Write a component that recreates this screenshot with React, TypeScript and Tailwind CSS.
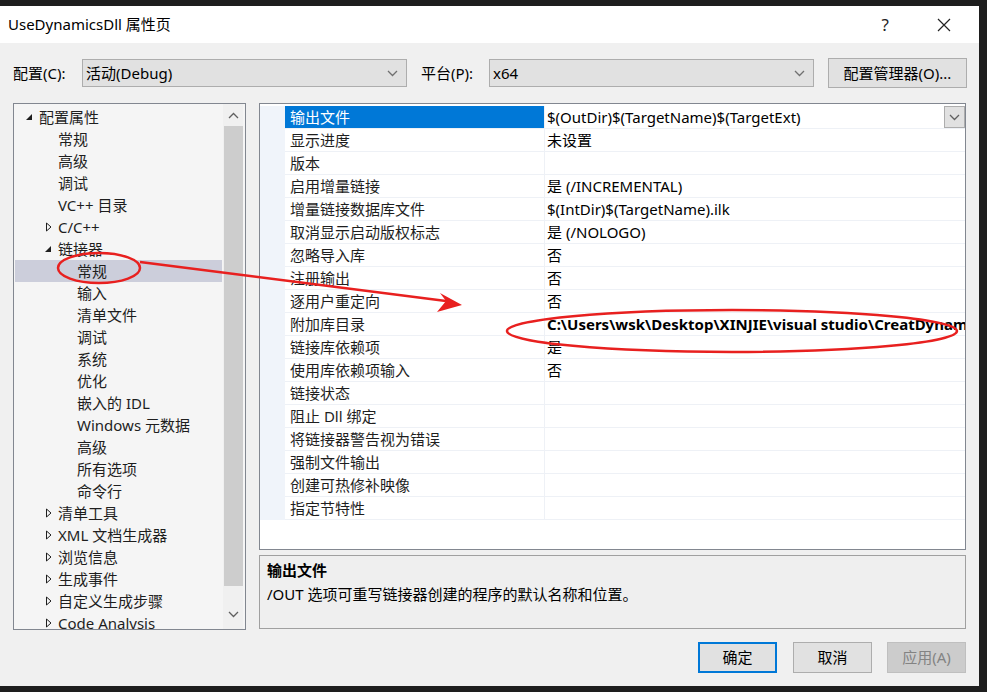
import React from 'react';

// 左侧树节点
type TreeNode = { label: string; level: number; arrow?: 'open' | 'closed'; selected?: boolean };

const treeNodes: TreeNode[] = [
  { label: '配置属性', level: 0, arrow: 'open' },
  { label: '常规', level: 1 },
  { label: '高级', level: 1 },
  { label: '调试', level: 1 },
  { label: 'VC++ 目录', level: 1 },
  { label: 'C/C++', level: 1, arrow: 'closed' },
  { label: '链接器', level: 1, arrow: 'open' },
  { label: '常规', level: 2, selected: true },
  { label: '输入', level: 2 },
  { label: '清单文件', level: 2 },
  { label: '调试', level: 2 },
  { label: '系统', level: 2 },
  { label: '优化', level: 2 },
  { label: '嵌入的 IDL', level: 2 },
  { label: 'Windows 元数据', level: 2 },
  { label: '高级', level: 2 },
  { label: '所有选项', level: 2 },
  { label: '命令行', level: 2 },
  { label: '清单工具', level: 1, arrow: 'closed' },
  { label: 'XML 文档生成器', level: 1, arrow: 'closed' },
  { label: '浏览信息', level: 1, arrow: 'closed' },
  { label: '生成事件', level: 1, arrow: 'closed' },
  { label: '自定义生成步骤', level: 1, arrow: 'closed' },
  { label: 'Code Analysis', level: 1, arrow: 'closed' },
];

const props: { name: string; value: string; bold?: boolean }[] = [
  { name: '输出文件', value: '$(OutDir)$(TargetName)$(TargetExt)' },
  { name: '显示进度', value: '未设置' },
  { name: '版本', value: '' },
  { name: '启用增量链接', value: '是 (/INCREMENTAL)' },
  { name: '增量链接数据库文件', value: '$(IntDir)$(TargetName).ilk' },
  { name: '取消显示启动版权标志', value: '是 (/NOLOGO)' },
  { name: '忽略导入库', value: '否' },
  { name: '注册输出', value: '否' },
  { name: '逐用户重定向', value: '否' },
  { name: '附加库目录', value: 'C:\\Users\\wsk\\Desktop\\XINJIE\\visual studio\\CreatDynamicsDll\\x64\\Debug', bold: true },
  { name: '链接库依赖项', value: '是' },
  { name: '使用库依赖项输入', value: '否' },
  { name: '链接状态', value: '' },
  { name: '阻止 Dll 绑定', value: '' },
  { name: '将链接器警告视为错误', value: '' },
  { name: '强制文件输出', value: '' },
  { name: '创建可热修补映像', value: '' },
  { name: '指定节特性', value: '' },
];

const font = { fontFamily: '"Noto Sans", "Noto Sans CJK SC", sans-serif' };

function Chevron({ up = false, className = '' }: { up?: boolean; className?: string }) {
  return (
    <svg width="11" height="7" viewBox="0 0 11 7" className={className}>
      <path d={up ? 'M1 6 L5.5 1.5 L10 6' : 'M1 1 L5.5 5.5 L10 1'} fill="none" stroke="currentColor" strokeWidth="1.3" />
    </svg>
  );
}

function Dropdown({ value, width }: { value: string; width: string }) {
  return (
    <div className={`${width} h-[28px] border border-[#adadad] bg-[#e1e1e1] flex items-center justify-between pl-[3px] pr-[8px] text-[15px] text-black`}>
      <span>{value}</span>
      <Chevron className="text-[#707070]" />
    </div>
  );
}

function TreeArrow({ kind }: { kind?: 'open' | 'closed' }) {
  if (!kind) return <span className="w-[14px] shrink-0" />;
  if (kind === 'open')
    return (
      <svg width="14" height="14" viewBox="0 0 14 14" className="shrink-0">
        <path d="M9 4 L9 10 L3 10 Z" fill="#1e1e1e" />
      </svg>
    );
  return (
    <svg width="14" height="14" viewBox="0 0 14 14" className="shrink-0">
      <path d="M4.5 3 L9 7 L4.5 11 Z" fill="none" stroke="#1e1e1e" strokeWidth="1" />
    </svg>
  );
}

function Button({ label, kind }: { label: string; kind: 'primary' | 'normal' | 'disabled' }) {
  const cls =
    kind === 'primary'
      ? 'border-2 border-[#0078d7] bg-[#e1e1e1] text-black'
      : kind === 'disabled'
      ? 'border border-[#bfbfbf] bg-[#cccccc] text-[#838383]'
      : 'border border-[#adadad] bg-[#e1e1e1] text-black';
  return <div className={`w-[79px] h-[31px] flex items-center justify-center text-[15px] ${cls}`}>{label}</div>;
}

export default function App() {
  return (
    <div className="relative w-[987px] h-[692px] bg-[#1e1e1e] overflow-hidden" style={font}>
      <div className="pt-[6px]">
        <div className="w-[979px] h-[680px] flex flex-col bg-[#f0f0f0]">
          {/* 标题栏 */}
          <div className="h-[37px] bg-white flex items-center justify-between pl-[8px] pr-[28px] shrink-0">
            <span className="text-[15px] text-black">UseDynamicsDll 属性页</span>
            <div className="flex items-center gap-[48px] text-[17px] text-[#222]">
              <span>?</span>
              <svg width="14" height="14" viewBox="0 0 14 14">
                <path d="M1 1 L13 13 M13 1 L1 13" stroke="#222" strokeWidth="1.2" />
              </svg>
            </div>
          </div>

          {/* 配置/平台 */}
          <div className="mt-[15px] h-[30px] flex items-center pl-[13px] shrink-0">
            <span className="text-[15px] w-[69px]">配置(C):</span>
            <Dropdown value="活动(Debug)" width="w-[325px]" />
            <span className="text-[15px] ml-[14px] w-[68px]">平台(P):</span>
            <Dropdown value="x64" width="w-[325px]" />
            <div className="ml-[14px] w-[139px] h-[30px] border border-[#adadad] bg-[#e1e1e1] flex items-center justify-center text-[15px]">
              配置管理器(O)...
            </div>
          </div>

          {/* 主体 */}
          <div className="mt-[15px] flex pl-[13px] gap-[13px] h-[527px] shrink-0">
            {/* 树 */}
            <div className="w-[233px] h-full border border-[#828790] bg-[#f5f5f5] flex overflow-hidden">
              <div className="flex-1 min-w-0 pt-[2px] pl-[1px] overflow-hidden">
                {treeNodes.map((n, i) => (
                  <div
                    key={i}
                    className={`h-[22px] flex items-center text-[15px] text-[#1e1e1e] whitespace-nowrap ${n.selected ? 'bg-[#cccedb]' : ''}`}
                    style={{ paddingLeft: 8 + n.level * 19 }}
                  >
                    <TreeArrow kind={n.arrow} />
                    <span className="ml-[2px]">{n.label}</span>
                  </div>
                ))}
              </div>
              <div className="w-[20px] shrink-0 ml-[1px] mr-[2px] bg-[#f0f0f0] flex flex-col items-center">
                <div className="h-[22px] flex items-center justify-center text-[#606060]">
                  <Chevron up />
                </div>
                <div className="w-[19px] h-[460px] bg-[#cdcdcd]" />
                <div className="flex-1" />
                <div className="h-[30px] flex items-center justify-center text-[#606060]">
                  <Chevron />
                </div>
              </div>
            </div>

            {/* 属性网格 + 描述 */}
            <div className="w-[707px] flex flex-col">
              <div className="h-[447px] border border-[#828790] bg-white flex flex-col overflow-hidden">
                <div className="pt-[2px] flex">
                  <div className="w-[25px] shrink-0 bg-[#f0f4fa]" />
                  <div className="flex-1 min-w-0 flex flex-col">
                    {props.map((p, i) => (
                      <div key={i} className="h-[23px] flex border-b border-[#eef1f6] text-[15px]">
                        <div
                          className={`w-[259px] shrink-0 pl-[5px] flex items-center whitespace-nowrap ${i === 0 ? 'bg-[#0078d7] text-white' : 'text-[#1e1e1e]'}`}
                        >
                          {p.name}
                        </div>
                        <div className="flex-1 min-w-0 border-l border-[#eef1f6] pl-[2px] flex items-center justify-between overflow-hidden whitespace-nowrap">
                          <span className={p.bold ? 'font-bold text-black' : 'text-black'}>{p.value}</span>
                          {i === 0 && (
                            <div className="w-[21px] h-[22px] shrink-0 border border-[#adadad] bg-[#e1e1e1] flex items-center justify-center text-[#606060]">
                              <Chevron />
                            </div>
                          )}
                        </div>
                      </div>
                    ))}
                  </div>
                </div>
              </div>
              <div className="mt-[5px] h-[74px] border border-[#a0a0a0] bg-[#efefef] px-[7px] pt-[3px]">
                <div className="text-[15px] font-bold text-black">输出文件</div>
                <div className="text-[15px] text-black mt-[1px]">/OUT 选项可重写链接器创建的程序的默认名称和位置。</div>
              </div>
            </div>
          </div>

          {/* 按钮 */}
          <div className="mt-[12px] flex justify-end gap-[16px] pr-[13px]">
            <Button label="确定" kind="primary" />
            <Button label="取消" kind="normal" />
            <div className="-ml-[1px]">
              <Button label="应用(A)" kind="disabled" />
            </div>
          </div>
        </div>
      </div>

      {/* 红色标注 */}
      <svg className="absolute inset-0 pointer-events-none" width="987" height="692">
        <ellipse cx="99" cy="268" rx="41" ry="15" fill="none" stroke="#e8201f" strokeWidth="2.5" />
        <path d="M140 262 L446 301" stroke="#e8201f" strokeWidth="2.5" />
        <path d="M462 305 L440 293 L446 301 L437 312 Z" fill="#e8201f" />
        <ellipse cx="732" cy="331" rx="225" ry="21" fill="none" stroke="#e8201f" strokeWidth="2.5" />
      </svg>
    </div>
  );
}
